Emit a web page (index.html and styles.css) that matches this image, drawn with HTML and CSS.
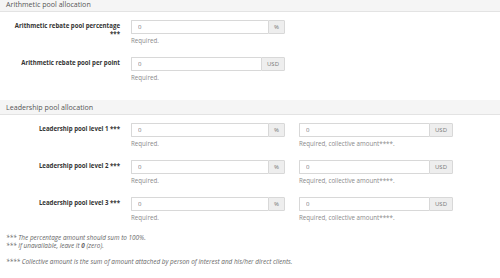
FILE: index.html
```html
<!DOCTYPE html>
<html lang="en">

<head>
    <meta charset="UTF-8">
    <title>Pool allocation</title>
    <link rel="stylesheet" href="styles.css">
</head>

<body>

    <div class="page">
        <div class="panel">
            <div class="panel-heading">Arithmetic pool allocation</div>
            <div class="panel-body">
                <div class="form-row">
                    <label class="form-label">Arithmetic rebate pool percentage ***</label>
                    <div class="field">
                        <div class="input-group">
                            <input class="form-input" type="text" value="0">
                            <span class="addon">%</span>
                        </div>
                        <p class="help">Required.</p>
                    </div>
                </div>
                <div class="form-row">
                    <label class="form-label">Arithmetic rebate pool per point</label>
                    <div class="field">
                        <div class="input-group">
                            <input class="form-input" type="text" value="0">
                            <span class="addon">USD</span>
                        </div>
                        <p class="help">Required.</p>
                    </div>
                </div>
            </div>
        </div>

        <div class="panel">
            <div class="panel-heading">Leadership pool allocation</div>
            <div class="panel-body">
                <div class="form-row">
                    <label class="form-label">Leadership pool level 1 ***</label>
                    <div class="field">
                        <div class="input-group">
                            <input class="form-input" type="text" value="0">
                            <span class="addon">%</span>
                        </div>
                        <p class="help">Required.</p>
                    </div>
                    <div class="field">
                        <div class="input-group">
                            <input class="form-input" type="text" value="0">
                            <span class="addon">USD</span>
                        </div>
                        <p class="help">Required, collective amount****.</p>
                    </div>
                </div>
                <div class="form-row">
                    <label class="form-label">Leadership pool level 2 ***</label>
                    <div class="field">
                        <div class="input-group">
                            <input class="form-input" type="text" value="0">
                            <span class="addon">%</span>
                        </div>
                        <p class="help">Required.</p>
                    </div>
                    <div class="field">
                        <div class="input-group">
                            <input class="form-input" type="text" value="0">
                            <span class="addon">USD</span>
                        </div>
                        <p class="help">Required, collective amount****.</p>
                    </div>
                </div>
                <div class="form-row">
                    <label class="form-label">Leadership pool level 3 ***</label>
                    <div class="field">
                        <div class="input-group">
                            <input class="form-input" type="text" value="0">
                            <span class="addon">%</span>
                        </div>
                        <p class="help">Required.</p>
                    </div>
                    <div class="field">
                        <div class="input-group">
                            <input class="form-input" type="text" value="0">
                            <span class="addon">USD</span>
                        </div>
                        <p class="help">Required, collective amount****.</p>
                    </div>
                </div>

                <div class="notes">
                    <p>*** The percentage amount should sum to 100%.</p>
                    <p>*** If unavailable, leave it <b>0</b> (zero).</p>
                    <p class="gap">**** Collective amount is the sum of amount attached by person of interest and his/her direct clients.</p>
                </div>
            </div>
        </div>
    </div>

</body>

</html>
```

FILE: styles.css
```css
* {
    box-sizing: border-box;
}

body {
    font-family: 'Open Sans', sans-serif;
    font-size: 7px;
    color: #333;
    margin: 0;
    padding: 0;
    background-color: #fff;
    overflow: hidden;
}

/* the page is scrolled a little, the first heading is cut at the top */
.page {
    margin-top: -3px;
}

.panel-heading {
    background-color: #f5f5f5;
    border-bottom: 1px solid #e3e3e3;
    color: #555;
    font-size: 7.1px;
    line-height: 14px;
    padding: 0 6px;
}

.panel-body {
    padding: 8px 0 6px;
}

.form-row {
    display: flex;
    align-items: flex-start;
    margin-bottom: 12px;
}

.form-label {
    width: 131px;
    padding: 2px 11px 0 4px;
    text-align: right;
    font-weight: 700;
    font-size: 6.1px;
    line-height: 7.5px;
    color: #333;
}

.field {
    width: 154px;
    margin-right: 14px;
}

.input-group {
    display: flex;
    height: 14px;
}

.form-input {
    flex: 1;
    min-width: 0;
    height: 14px;
    margin: 0;
    padding: 0 6px;
    border: 1px solid #d8d8d8;
    border-right: 0;
    border-radius: 1px 0 0 1px;
    font-family: 'Open Sans', sans-serif;
    font-size: 6px;
    color: #777;
    outline: 0;
}

.addon {
    background-color: #eee;
    border: 1px solid #d8d8d8;
    border-radius: 0 1px 1px 0;
    padding: 0 5px;
    font-size: 6px;
    line-height: 12px;
    color: #777;
}

.help {
    margin: 3px 0 0;
    font-size: 6.2px;
    line-height: 8px;
    color: #8a8a8a;
}

.notes {
    padding: 0 6px 9px;
    font-style: italic;
    font-size: 6.4px;
    color: #666;
}

.notes p {
    margin: 0;
    line-height: 8px;
}

.notes .gap {
    margin-top: 8px;
}

.panel:last-child {
    border-bottom: 2px solid #e3e3e3;
}
```
